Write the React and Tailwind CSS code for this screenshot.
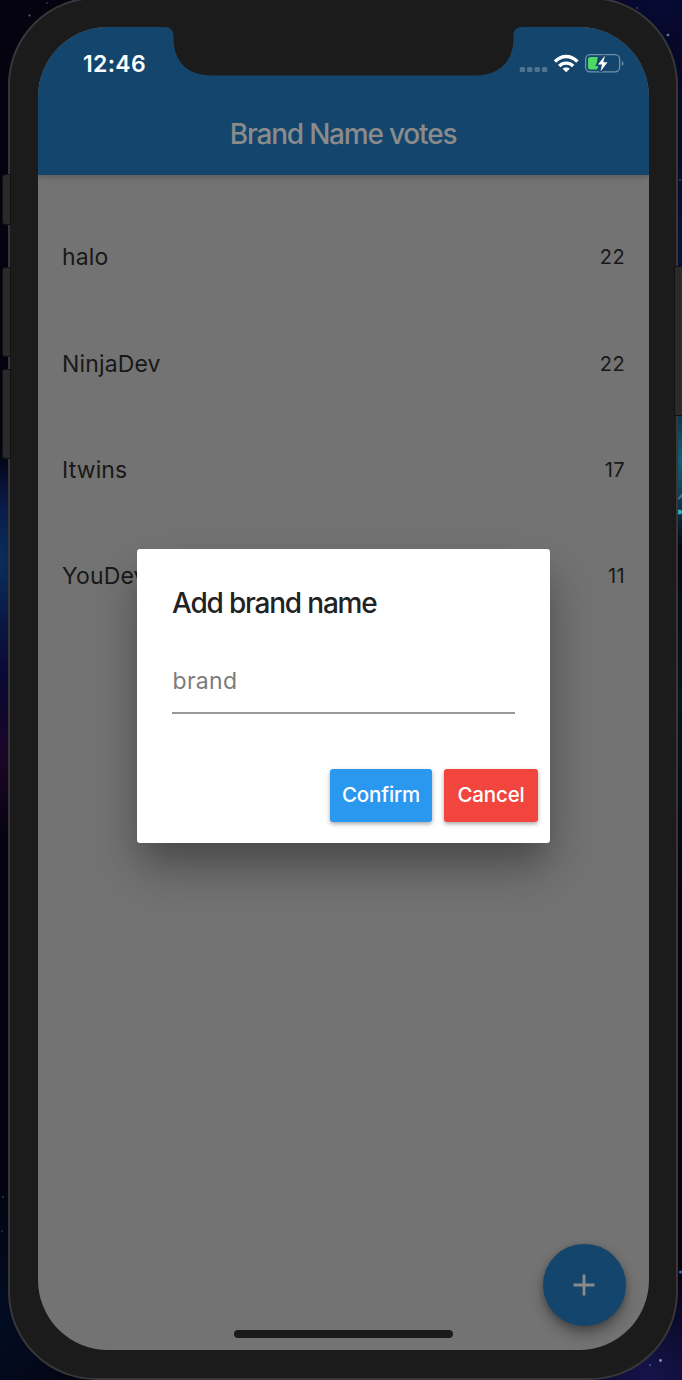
const brands = [
  { name: 'halo', votes: 22 },
  { name: 'NinjaDev', votes: 22 },
  { name: 'Itwins', votes: 17 },
  { name: 'YouDev', votes: 11 },
];

function Wallpaper() {
  return (
    <div
      aria-hidden="true"
      className="absolute inset-0 bg-[#04030f] bg-[radial-gradient(ellipse_60px_90px_at_682px_460px,#126278_0%,#0b3a4c_45%,transparent_100%),radial-gradient(ellipse_70px_220px_at_682px_260px,#06143a_0%,transparent_100%),radial-gradient(ellipse_160px_160px_at_660px_0px,#070a34_0%,transparent_100%),radial-gradient(ellipse_80px_200px_at_682px_700px,#04161f_0%,transparent_100%),radial-gradient(ellipse_120px_120px_at_650px_1380px,#16144c_0%,transparent_100%),radial-gradient(ellipse_50px_110px_at_0px_560px,#0a2f5c_0%,#0a1a48_50%,transparent_100%),radial-gradient(ellipse_50px_100px_at_0px_660px,#0c0a3c_0%,transparent_100%),radial-gradient(ellipse_50px_90px_at_0px_750px,#1e0628_0%,transparent_100%),radial-gradient(ellipse_100px_150px_at_0px_1320px,#020c22_0%,transparent_100%)]"
    >
      <svg width="682" height="1380" viewBox="0 0 682 1380" fill="#7f9cb5">
        <circle cx="29.500" cy="15.500" r="1" opacity=".7" />
        <circle cx="47" cy="3" r="1" opacity=".3" />
        <circle cx="637" cy="8" r="1" opacity=".4" />
        <circle cx="668" cy="35" r="1.300" opacity=".8" />
        <circle cx="680" cy="180" r="1" opacity=".4" />
        <circle cx="660.500" cy="1360.500" r="1.400" />
        <circle cx="650" cy="1365" r="1" fill="#276ba0" />
        <circle cx="680.500" cy="1272" r="1.500" fill="#3d6fbd" />
        <circle cx="3" cy="1197" r="1" opacity=".4" />
        <circle cx="2" cy="1231" r="1" opacity=".3" />
        <path d="M677 499L682 493V497L677 501Z" opacity=".5" />
        <circle cx="679.500" cy="512" r="2.500" fill="#2cacb5" />
      </svg>
    </div>
  );
}

function SideKeys() {
  const key = 'absolute border border-[#111] bg-[#2a2a2a]';
  return (
    <>
      <div className={`${key} left-[2px] top-[174px] h-[51px] w-[9px] rounded-l-[3px]`} />
      <div className={`${key} left-[2px] top-[267px] h-[90px] w-[9px] rounded-l-[3px]`} />
      <div className={`${key} left-[2px] top-[369px] h-[90px] w-[9px] rounded-l-[3px]`} />
      <div className={`${key} left-[674px] top-[266px] h-[150px] w-[10px] rounded-[2px]`} />
    </>
  );
}

function Notch() {
  return (
    <svg className="absolute left-[127px] top-0" width="357" height="49" viewBox="0 0 357 49" fill="#1b1b1b">
      <path d="M0 0C5 0 8 3 8.500 8V11C8.500 34 22 48.500 47 48.500H310C335 48.500 348.500 34 348.500 11V8C348.500 3 352 0 357 0Z" />
    </svg>
  );
}

function StatusIcons() {
  return (
    <svg width="106" height="22" viewBox="519 53 106 22" fill="none">
      <g fill="#fff" fillOpacity=".25">
        <rect x="519.700" y="67" width="5.400" height="5" rx="1.500" />
        <rect x="527" y="67" width="5.400" height="5" rx="1.500" />
        <rect x="534.500" y="67" width="5.400" height="5" rx="1.500" />
        <rect x="541.900" y="67" width="5.400" height="5" rx="1.500" />
      </g>
      <g stroke="#fff" strokeWidth="3.400">
        <path d="M555 61.600C561.500 54.800 570.900 54.800 577.400 61.600" />
        <path d="M559.200 66C563 62.200 569.400 62.200 573.200 66" />
      </g>
      <path d="M566.200 72.200L562.600 68.800C564.500 67.100 567.900 67.100 569.800 68.800Z" fill="#fff" />
      <rect x="585.600" y="54.600" width="34" height="17.200" rx="4.500" stroke="#fff" strokeOpacity=".4" strokeWidth="1.300" />
      <path d="M621.800 61V66C624 65 624 62 621.800 61Z" fill="#fff" fillOpacity=".4" />
      <path d="M590.500 57H597.800L596.500 64.600H598V67.500L596.800 69.500H590.500Q588 69.500 588 67V59.500Q588 57 590.500 57Z" fill="#4cd964" />
      <path d="M605 55.500L598 64.400H602L600.500 71.500L607.500 62.200H603.300Z" fill="#fff" stroke="#14466d" strokeWidth="3" paintOrder="stroke" />
    </svg>
  );
}

function Header() {
  return (
    <header className="relative h-[148px] bg-[#14466d] shadow-[0_2px_6px_rgba(0,0,0,0.22)]">
      <div className="flex h-[74px] items-center justify-between pl-[45px] pr-[24px]">
        <span className="text-[23px] font-semibold leading-none tracking-[0.300px] text-white">12:46</span>
        <StatusIcons />
      </div>
      <h1 className="pr-[1px] pt-[15px] text-center text-[28px] font-medium leading-[36px] tracking-[-1.200px] text-[#8b8b8b]">
        Brand Name votes
      </h1>
      <Notch />
    </header>
  );
}

function BrandList() {
  return (
    <ul className="flex grow flex-col px-[24px] pt-[29.600px] text-[#181818]">
      {brands.map((brand) => (
        <li key={brand.name} className="flex h-[106.300px] items-center justify-between">
          <span className="text-[23px] tracking-[0.150px]">{brand.name}</span>
          <span className="pb-[1px] text-[20px] tracking-[0.400px]">{brand.votes}</span>
        </li>
      ))}
    </ul>
  );
}

function AddBrandDialog() {
  const button =
    'h-[53px] rounded-[3px] pb-[1px] text-[20.500px] font-medium tracking-[-0.150px] text-white shadow-[0_2px_4px_rgba(0,0,0,0.35)]';
  return (
    <section
      role="dialog"
      className="absolute left-[99px] top-[522px] flex h-[294px] w-[413px] flex-col rounded-[3px] bg-white shadow-[0_26px_50px_rgba(0,0,0,0.28),0_20px_26px_-8px_rgba(0,0,0,0.14)]"
    >
      <div className="px-[35px] pt-[36px]">
        <h2 className="text-[28px] font-medium leading-[36px] tracking-[-1.200px] text-[#222]">Add brand name</h2>
        <div className="mt-[30px] h-[61px] pl-[0.500px] pt-[14px] text-[23px] leading-[33px] tracking-[0.300px] text-[#7b7b7b]">
          brand
        </div>
        <div className="h-[2px] bg-[#999]" />
      </div>
      <div className="mt-auto flex justify-end gap-[12px] pb-[21px] pr-[12px]">
        <button className={`${button} w-[102px] bg-[#2b98f0]`}>Confirm</button>
        <button className={`${button} w-[94px] bg-[#f2453d]`}>Cancel</button>
      </div>
    </section>
  );
}

function AddButton() {
  return (
    <button
      aria-label="Add"
      className="flex size-[82.500px] items-center justify-center rounded-full bg-[#14466d] shadow-[0_8px_14px_rgba(0,0,0,0.3),0_2px_6px_rgba(0,0,0,0.2)]"
    >
      <svg width="22" height="22" viewBox="0 0 22 22" stroke="#8b8b8b" strokeWidth="2.800">
        <path d="M11 0.500V21.500M0.500 11H21.500" />
      </svg>
    </button>
  );
}

export default function App() {
  return (
    <main className="relative h-[1380px] w-[682px] overflow-hidden pl-[8px] font-['Inter','Liberation_Sans',sans-serif]">
      <Wallpaper />
      <div className="relative -mt-[3px] h-[1383px] w-[670px] rounded-[88px] border-2 border-[#37373a] bg-[#1b1b1b] px-[28px] pt-[28px]">
        <div className="relative flex h-[1323px] w-[611px] flex-col overflow-hidden rounded-[70px] bg-[#737373]">
          <Header />
          <BrandList />
          <div className="flex justify-end pb-[4px] pr-[23.500px]">
            <AddButton />
          </div>
          <div className="mb-[12px] ml-[196px] h-[8px] w-[219px] rounded-full bg-[#1b1b1b]" />
          <AddBrandDialog />
        </div>
      </div>
      <SideKeys />
    </main>
  );
}
